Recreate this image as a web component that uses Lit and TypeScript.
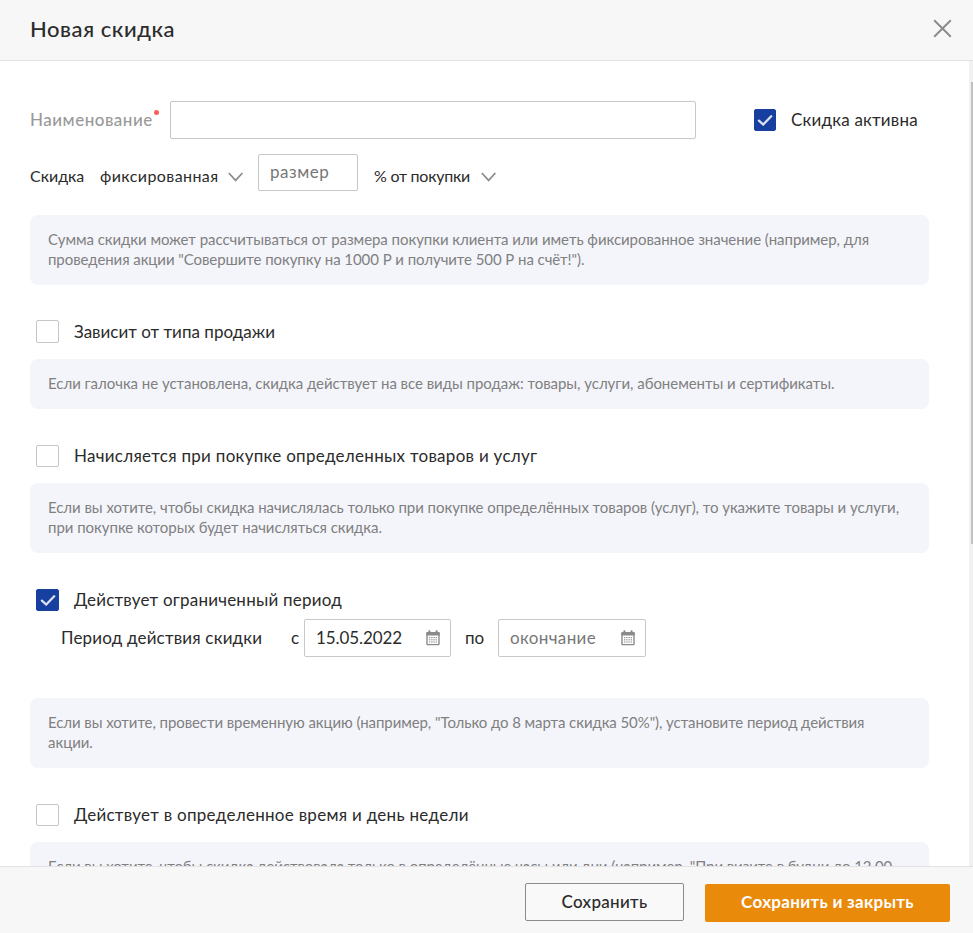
import { LitElement, html, css, svg } from "lit";
import { customElement, property } from "lit/decorators.js";
import { classMap } from "lit/directives/class-map.js";

type Line = [text: string, tracking: number];

/** Text run with its own tracking, in pixels. */
const run = (text: string, tracking = 0) =>
  html`<span style="letter-spacing:${tracking}px">${text}</span>`;

const chevron = html`<svg class="chevron" width="16" height="10" viewBox="0 0 16 10">
  <path d="M0.8 1 L7.6 8.4 L14.4 1" fill="none" stroke="#8c8c8c" stroke-width="1.7" />
</svg>`;

const calendar = html`<svg class="calendar" width="14" height="16" viewBox="0 0 14 16">
  <rect x="1" y="3" width="12" height="11.6" rx="0.6" fill="#fff" stroke="#8a8a8a" stroke-width="1.4" />
  <rect x="0.3" y="2" width="13.4" height="3.6" rx="0.8" fill="#8a8a8a" />
  <rect x="2.4" y="0.3" width="2" height="3" rx="0.6" fill="#8a8a8a" />
  <rect x="9.6" y="0.3" width="2" height="3" rx="0.6" fill="#8a8a8a" />
  ${[7, 9.2, 11.4].map((y) => [3.1, 5.3, 7.5, 9.7].map((x) =>
    svg`<rect x=${x} y=${y} width="1.2" height="1.2" fill="#8a8a8a" />`))}
</svg>`;

@customElement("check-box")
export class CheckBox extends LitElement {
  @property({ type: Boolean }) checked = false;

  static styles = css`
    :host { display: block; width: 23px; height: 22px; flex: none; }
    .box {
      box-sizing: border-box; width: 100%; height: 100%;
      border: 1px solid #c6c6c6; border-radius: 2px; background: #fff;
      display: flex; align-items: center; justify-content: center;
    }
    .on { background: #173f9f; border-color: #173f9f; }
  `;

  render() {
    return html`<div class=${classMap({ box: true, on: this.checked })}>
      ${this.checked
        ? html`<svg width="16" height="12" viewBox="0 0 16 12">
            <path d="M1.9 6.6 L6.2 10.5 L14.2 2.3" fill="none" stroke="#dbe2f1" stroke-width="2.3" stroke-linecap="round" />
          </svg>`
        : null}
    </div>`;
  }
}

@customElement("app-root")
export class AppRoot extends LitElement {
  static styles = css`
    :host {
      display: flex; flex-direction: column; height: 933px; overflow: hidden;
      background: #fff; color: #2b2b2b;
      font: 400 17px/20px Lato, "Liberation Sans", sans-serif;
      white-space: nowrap;
    }
    * { box-sizing: border-box; }
    svg { display: block; flex: none; }
    header {
      flex: none; height: 61px; padding: 0 21px 2px 30px;
      display: flex; justify-content: space-between; align-items: center;
      background: #f7f7f7; border-bottom: 1px solid #e2e2e2;
    }
    h1 { margin: 0; font-size: 22px; font-weight: 500; line-height: 28px; }
    .close { margin-bottom: 1px; }
    main { flex: 1; min-height: 0; display: flex; justify-content: space-between; overflow: hidden; }
    .content { width: 899px; margin-left: 30px; padding-top: 40px; }
    .track { width: 4px; background: #f1f1f1; padding: 21px 0 0 2px; }
    .thumb { height: 462px; background: #c1c1c1; }
    .row { display: flex; align-items: center; }
    .field {
      height: 38px; border: 1px solid #c8c8c8; border-radius: 2px; background: #fff;
      display: flex; align-items: center; justify-content: space-between;
      padding: 0 10px 0 11px;
    }
    .name-row { height: 38px; }
    .name-label { width: 140px; color: #999; font-weight: 500; display: flex; }
    .dot { width: 5px; height: 5px; border-radius: 50%; background: #ff5c5c; margin: 0 0 0 1px; }
    .name { width: 526px; }
    .active { margin-left: 58px; gap: 15px; }
    .active check-box { width: 22px; }
    .size-row { margin-top: 15px; height: 37px; font-size: 16px; }
    .size-row > span { position: relative; top: 3px; }
    .size-row > .chevron { position: relative; top: 4px; }
    .word { width: 70px; }
    .kind { width: 128px; }
    .size { width: 100px; height: 37px; margin: 0 16px 0 14px; padding-bottom: 2px; color: #777; font-size: 17px; }
    .unit { width: 107px; }
    .hint {
      background: #f4f5fb; border-radius: 8px; padding: 14px 18px 16px;
      color: #808080; font-size: 15px;
    }
    .hint div { height: 20px; }
    .first-hint { margin-top: 24px; }
    .option { margin: 36px 0 16px 6px; height: 22px; gap: 15px; }
    .option.tall { margin-top: 35px; height: 23px; }
    .option.tall check-box { height: 23px; }
    .option.compact { margin-bottom: 8px; }
    .period { height: 38px; margin: 0 0 41px 31px; }
    .period-label { width: 230px; }
    .from { width: 13px; }
    .date { width: 147px; }
    .date.end { width: 148px; color: #777; }
    .to { width: 47px; padding-left: 14px; }
    footer {
      flex: none; height: 67px; padding: 16px 23px 0 0;
      display: flex; justify-content: flex-end; gap: 21px;
      background: #f7f7f7; border-top: 1px solid #e2e2e2;
    }
    .button {
      height: 38px; display: flex; align-items: center; justify-content: center;
      border-radius: 2px; font-weight: 500;
    }
    .plain { width: 159px; border: 1px solid #8c8c8c; background: #f9f9f9; }
    .primary { width: 245px; margin-top: 1px; padding-bottom: 2px; background: #ea8a0b; color: #fff; font-weight: 700; }
  `;

  private hint(lines: Line[], extra = "") {
    return html`<div class="hint ${extra}">${lines.map(([t, s]) => html`<div>${run(t, s)}</div>`)}</div>`;
  }

  private option(text: string, tracking: number, checked = false, extra = "") {
    return html`<div class="row option ${extra}">
      <check-box ?checked=${checked}></check-box>${run(text, tracking)}
    </div>`;
  }

  render() {
    return html`
      <header>
        <h1>${run("Новая скидка", 0.55)}</h1>
        <svg class="close" width="19" height="19" viewBox="0 0 19 19">
          <path d="M1.2 1.2 L17.8 17.8 M17.8 1.2 L1.2 17.8" stroke="#8c8c8c" stroke-width="2" />
        </svg>
      </header>
      <main>
        <div class="content">
          <div class="row name-row">
            <div class="name-label">${run("Наименование", 0.5)}<i class="dot"></i></div>
            <div class="field name"></div>
            <div class="row active"><check-box checked></check-box>${run("Скидка активна", 0.2)}</div>
          </div>
          <div class="row size-row">
            <span class="word">${run("Скидка")}</span>
            <span class="kind">${run("фиксированная", 0.42)}</span>${chevron}
            <div class="field size">${run("размер", 0.52)}</div>
            <span class="unit">${run("% от покупки", -0.25)}</span>${chevron}
          </div>
          ${this.hint([
            ["Сумма скидки может рассчитываться от размера покупки клиента или иметь фиксированное значение (например, для", -0.046],
            ['проведения акции "Совершите покупку на 1000 Р и получите 500 Р на счёт!").', -0.07],
          ], "first-hint")}
          ${this.option("Зависит от типа продажи", 0.01, false, "tall")}
          ${this.hint([
            ["Если галочка не установлена, скидка действует на все виды продаж: товары, услуги, абонементы и сертификаты.", -0.038],
          ])}
          ${this.option("Начисляется при покупке определенных товаров и услуг", 0.28)}
          ${this.hint([
            ["Если вы хотите, чтобы скидка начислялась только при покупке определённых товаров (услуг), то укажите товары и услуги,", -0.052],
            ["при покупке которых будет начисляться скидка.", -0.036],
          ])}
          ${this.option("Действует ограниченный период", 0.21, true, "compact")}
          <div class="row period">
            <span class="period-label">${run("Период действия скидки", 0.18)}</span>
            <span class="from">с</span>
            <div class="field date">${run("15.05.2022", -0.09)}${calendar}</div>
            <span class="to">по</span>
            <div class="field date end">${run("окончание", 0.36)}${calendar}</div>
          </div>
          ${this.hint([
            ['Если вы хотите, провести временную акцию (например, "Только до 8 марта скидка 50%"), установите период действия', -0.08],
            ["акции.", -0.04],
          ])}
          ${this.option("Действует в определенное время и день недели", 0.28)}
          ${this.hint([
            ['Если вы хотите, чтобы скидка действовала только в определённые часы или дни (например, "При визите в будни до 12.00', -0.078],
          ])}
        </div>
        <div class="track"><div class="thumb"></div></div>
      </main>
      <footer>
        <div class="button plain">${run("Сохранить", 0.3)}</div>
        <div class="button primary">${run("Сохранить и закрыть", 0.3)}</div>
      </footer>
    `;
  }
}
